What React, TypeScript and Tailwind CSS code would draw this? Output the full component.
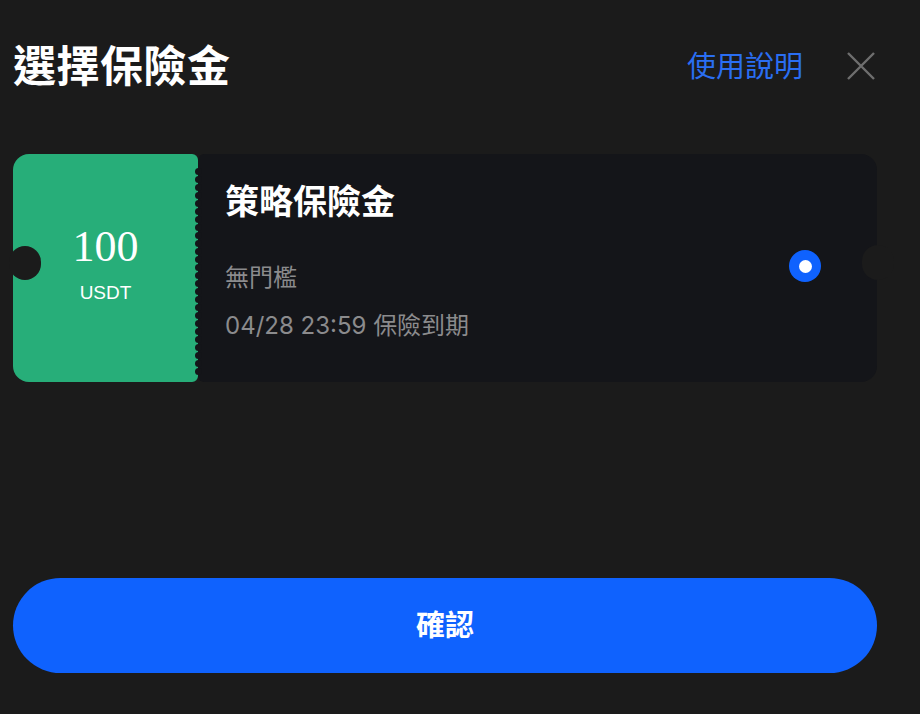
import React from "react";

const dots = Array.from({ length: 26 }, (_, i) => i);

export default function App() {
  return (
    <main className="min-h-[714px] w-[920px] bg-[#1b1b1b] px-[13px] pt-[40px] font-['Inter','Noto_Sans_CJK_TC',sans-serif] text-white">
      <div className="w-[864px]">
        {/* header */}
        <div className="flex h-[52px] items-center justify-between">
          <h1 className="text-[43px] font-bold leading-none tracking-[0.5px]">選擇保險金</h1>
          <div className="flex items-center">
            <button type="button" className="text-[29px] leading-none text-[#2a6ef2]">
              使用說明
            </button>
            <button type="button" className="ml-[44px] mr-[2px] text-[#6e6e6e]">
              <svg width="28" height="28" viewBox="0 0 28 28" fill="none">
                <path d="M1 1L27 27M27 1L1 27" stroke="currentColor" strokeWidth="2.4" />
              </svg>
            </button>
          </div>
        </div>

        {/* ticket */}
        <div className="relative mt-[62px] flex h-[228px]">
          <div className="relative flex w-[185px] flex-col items-center justify-center rounded-l-[16px] rounded-r-[6px] bg-[#27ae79]">
            <div className="mt-[-10px] font-['Liberation_Serif',serif] text-[44px] leading-none">100</div>
            <div className="mt-[14px] font-['Liberation_Sans',sans-serif] text-[19px] leading-none">USDT</div>
            <div className="absolute right-[-4px] top-[14px] flex flex-col gap-[1px]">
              {dots.map((d) => (
                <span key={d} className="block h-[7px] w-[7px] rounded-full bg-[#141519]" />
              ))}
            </div>
          </div>

          <div className="flex flex-1 items-center rounded-l-[6px] rounded-r-[16px] bg-[#141519]">
            <div className="flex-1 pl-[27px] pb-[12px]">
              <h2 className="text-[34px] font-bold leading-[40px]">策略保險金</h2>
              <p className="mt-[39px] text-[24px] leading-[34px] text-[#8b8b8d]">無門檻</p>
              <p className="mt-[14px] text-[24px] leading-[34px] text-[#8b8b8d]">04/28 23:59 保險到期</p>
            </div>
            <div className="mr-[56px] mb-[4px] flex h-[32px] w-[32px] items-center justify-center rounded-full bg-[#0f62fe]">
              <span className="block h-[13px] w-[13px] rounded-full bg-white" />
            </div>
          </div>

          {/* notches */}
          <span className="absolute left-[-4px] top-[92px] h-[34px] w-[32px] rounded-full bg-[#1b1b1b]" />
          <span className="absolute right-[-17px] top-[91px] h-[35px] w-[32px] rounded-full bg-[#1b1b1b]" />
        </div>

        {/* confirm */}
        <button
          type="button"
          className="mt-[196px] flex h-[95px] w-full items-center justify-center rounded-full bg-[#0f62fe] text-[29px] font-bold"
        >
          確認
        </button>
      </div>
    </main>
  );
}
